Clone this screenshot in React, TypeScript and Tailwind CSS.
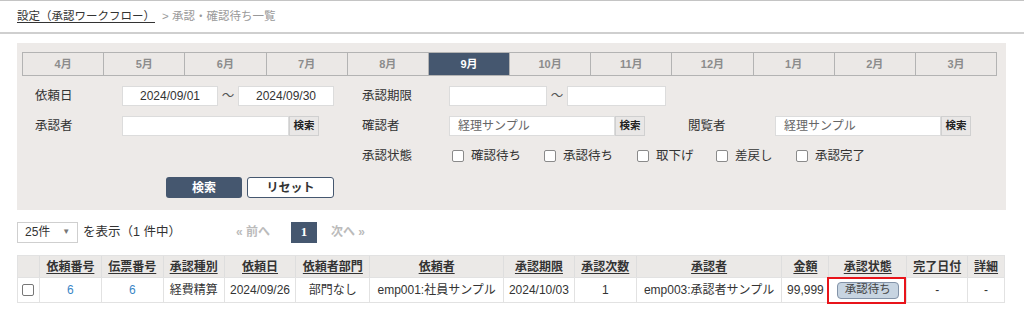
const MONTHS = ["4月", "5月", "6月", "7月", "8月", "9月", "10月", "11月", "12月", "1月", "2月", "3月"];
const STATUSES = [
  { label: "確認待ち", w: "w-[92px]" },
  { label: "承認待ち", w: "w-[93px]" },
  { label: "取下げ", w: "w-[79px]" },
  { label: "差戻し", w: "w-[80px]" },
  { label: "承認完了", w: "w-[80px]" },
];

const HEADERS = [
  { label: "", w: "w-[21px]" },
  { label: "依頼番号", w: "w-[62px]" },
  { label: "伝票番号", w: "w-[62px]" },
  { label: "承認種別", w: "w-[61px]" },
  { label: "依頼日", w: "w-[72px]" },
  { label: "依頼者部門", w: "w-[74px]" },
  { label: "依頼者", w: "w-[134px]" },
  { label: "承認期限", w: "w-[71px]" },
  { label: "承認次数", w: "w-[62px]" },
  { label: "承認者", w: "w-[146px]" },
  { label: "金額", w: "w-[47px]" },
  { label: "承認状態", w: "w-[78px]" },
  { label: "完了日付", w: "w-[61px]" },
  { label: "詳細", w: "w-[37px]" },
];

const font = "font-['Liberation_Sans','Noto_Sans_CJK_JP',sans-serif]";

function Box({ w, value = "", center = false }: { w: string; value?: string; center?: boolean }) {
  return (
    <div
      className={`${w} h-[20px] bg-white border border-[#dcdcdc] flex items-center text-[12px] ${center ? "justify-center text-[#333]" : "pl-[8px] text-[#666]"}`}
    >
      {value}
    </div>
  );
}

function SearchBtn() {
  return (
    <div className="w-[30px] h-[20px] bg-[#e9e7e6] border border-[#d0d0d0] flex items-center justify-center text-[10.5px] font-bold text-[#222]">
      検索
    </div>
  );
}

export default function App() {
  return (
    <div className={`w-[1024px] h-[316px] bg-white text-[#333] ${font} overflow-hidden`}>
      {/* breadcrumb */}
      <div className="border-t border-[#c4c4c4] border-b-2 border-b-[#cfcfcf] h-[34px] pl-[17px] flex items-center text-[11.5px]">
        <span className="underline underline-offset-2 text-[#333]">設定（承認ワークフロー）</span>
        <span className="ml-[7px] text-[#999]">&gt; 承認・確認待ち一覧</span>
      </div>

      {/* search panel */}
      <div className="ml-[17px] mt-[9px] w-[989px] h-[167px] bg-[#edeae8] pt-[9px] pl-[5px]">
        <div className="flex w-[975px] border border-[#b3b3b3]">
          {MONTHS.map((m, i) => (
            <div
              key={m}
              className={`flex-1 h-[22px] flex items-center justify-center text-[11px] font-bold ${i > 0 ? "border-l border-[#b3b3b3]" : ""} ${m === "9月" ? "bg-[#45576f] text-white" : "bg-[#ebe8e6] text-[#8c8c8c]"}`}
            >
              {m}
            </div>
          ))}
        </div>

        <div className="pl-[13px] text-[12.5px]">
          {/* row 1 */}
          <div className="flex items-center mt-[10px] h-[20px]">
            <span className="w-[87px]">依頼日</span>
            <Box w="w-[96px]" value="2024/09/01" center />
            <span className="w-[20px] text-center text-[#555]">～</span>
            <Box w="w-[96px]" value="2024/09/30" center />
            <span className="w-[28px]" />
            <span className="w-[87px]">承認期限</span>
            <Box w="w-[98px]" />
            <span className="w-[20px] text-center text-[#555]">～</span>
            <Box w="w-[99px]" />
          </div>

          {/* row 2 */}
          <div className="flex items-center mt-[10px] h-[20px]">
            <span className="w-[87px]">承認者</span>
            <Box w="w-[167px]" />
            <SearchBtn />
            <span className="w-[43px]" />
            <span className="w-[87px]">確認者</span>
            <Box w="w-[166px]" value="経理サンプル" />
            <SearchBtn />
            <span className="w-[43px]" />
            <span className="w-[87px]">閲覧者</span>
            <Box w="w-[166px]" value="経理サンプル" />
            <SearchBtn />
          </div>

          {/* row 3 */}
          <div className="flex items-center mt-[10px] h-[20px]">
            <span className="w-[327px]" />
            <span className="w-[90px]">承認状態</span>
            {STATUSES.map((s) => (
              <span key={s.label} className={`${s.w} flex items-center gap-[7px]`}>
                <span className="w-[12px] h-[12px] border border-[#8a8a8a] rounded-[2px] bg-white" />
                <span>{s.label}</span>
              </span>
            ))}
          </div>

          {/* buttons */}
          <div className="flex items-center mt-[11px] ml-[131px] gap-[5px]">
            <div className="w-[76px] h-[21px] rounded-[3px] bg-[#45576f] text-white text-[12px] font-bold flex items-center justify-center">
              検索
            </div>
            <div className="w-[87px] h-[21px] rounded-[3px] bg-white border border-[#45576f] text-[#333] text-[12px] font-bold flex items-center justify-center">
              リセット
            </div>
          </div>
        </div>
      </div>

      {/* paging */}
      <div className="flex items-center mt-[11px] ml-[17px] h-[22px] text-[12.5px]">
        <div className="w-[61px] h-[21px] border border-[#cfcfcf] flex items-center pl-[7px] text-[12px]">
          <span>25件</span>
          <span className="ml-[12px] text-[8px] text-[#777]">▼</span>
        </div>
        <span className="ml-[5px]">を表示（1 件中）</span>
        <span className="ml-[55px] text-[#bbb] text-[12px] font-bold">« 前へ</span>
        <div className="ml-[21px] w-[26px] h-[21px] bg-[#45576f] text-white text-[13px] font-bold flex items-center justify-center font-['Liberation_Serif',serif]">
          1
        </div>
        <span className="ml-[14px] text-[#bbb] text-[12px] font-bold">次へ »</span>
      </div>

      {/* table */}
      <div className="ml-[17px] mt-[12px] w-[988px] border border-[#e2e2e2] text-[12px]">
        <div className="flex h-[21px] bg-[#ebe9e7]">
          {HEADERS.map((h, i) => (
            <div
              key={i}
              className={`${h.w} ${i > 0 ? "border-l border-[#dedede]" : ""} flex items-center justify-center font-bold underline underline-offset-2 text-[#333]`}
            >
              {h.label}
            </div>
          ))}
        </div>
        <div className="flex h-[25px] border-t border-[#e2e2e2] bg-white">
          <div className="w-[21px] flex items-center justify-center">
            <span className="w-[12px] h-[12px] border border-[#777] rounded-[2px]" />
          </div>
          <Cell w="w-[62px]" blue>6</Cell>
          <Cell w="w-[62px]" blue>6</Cell>
          <Cell w="w-[61px]">経費精算</Cell>
          <Cell w="w-[72px]">2024/09/26</Cell>
          <Cell w="w-[74px]">部門なし</Cell>
          <Cell w="w-[134px]">emp001:社員サンプル</Cell>
          <Cell w="w-[71px]">2024/10/03</Cell>
          <Cell w="w-[62px]">1</Cell>
          <Cell w="w-[146px]">emp003:承認者サンプル</Cell>
          <Cell w="w-[47px]">99,999</Cell>
          <div className="w-[78px] border-l border-[#e2e2e2] flex items-center justify-center relative">
            <div className="w-[62px] h-[17px] rounded-[4px] bg-[#c7d4e1] border border-[#8393a8] text-[11.5px] text-[#444] flex items-center justify-center">
              承認待ち
            </div>
            <div className="absolute left-[-2px] top-[-1px] w-[79px] h-[27px] border-2 border-[#e8141b]" />
          </div>
          <Cell w="w-[61px]">-</Cell>
          <Cell w="w-[37px]">-</Cell>
        </div>
      </div>
    </div>
  );
}

function Cell({ w, blue = false, children }: { w: string; blue?: boolean; children: React.ReactNode }) {
  return (
    <div className={`${w} border-l border-[#e2e2e2] flex items-center justify-center ${blue ? "text-[#3a86c6]" : "text-[#333]"}`}>
      {children}
    </div>
  );
}
